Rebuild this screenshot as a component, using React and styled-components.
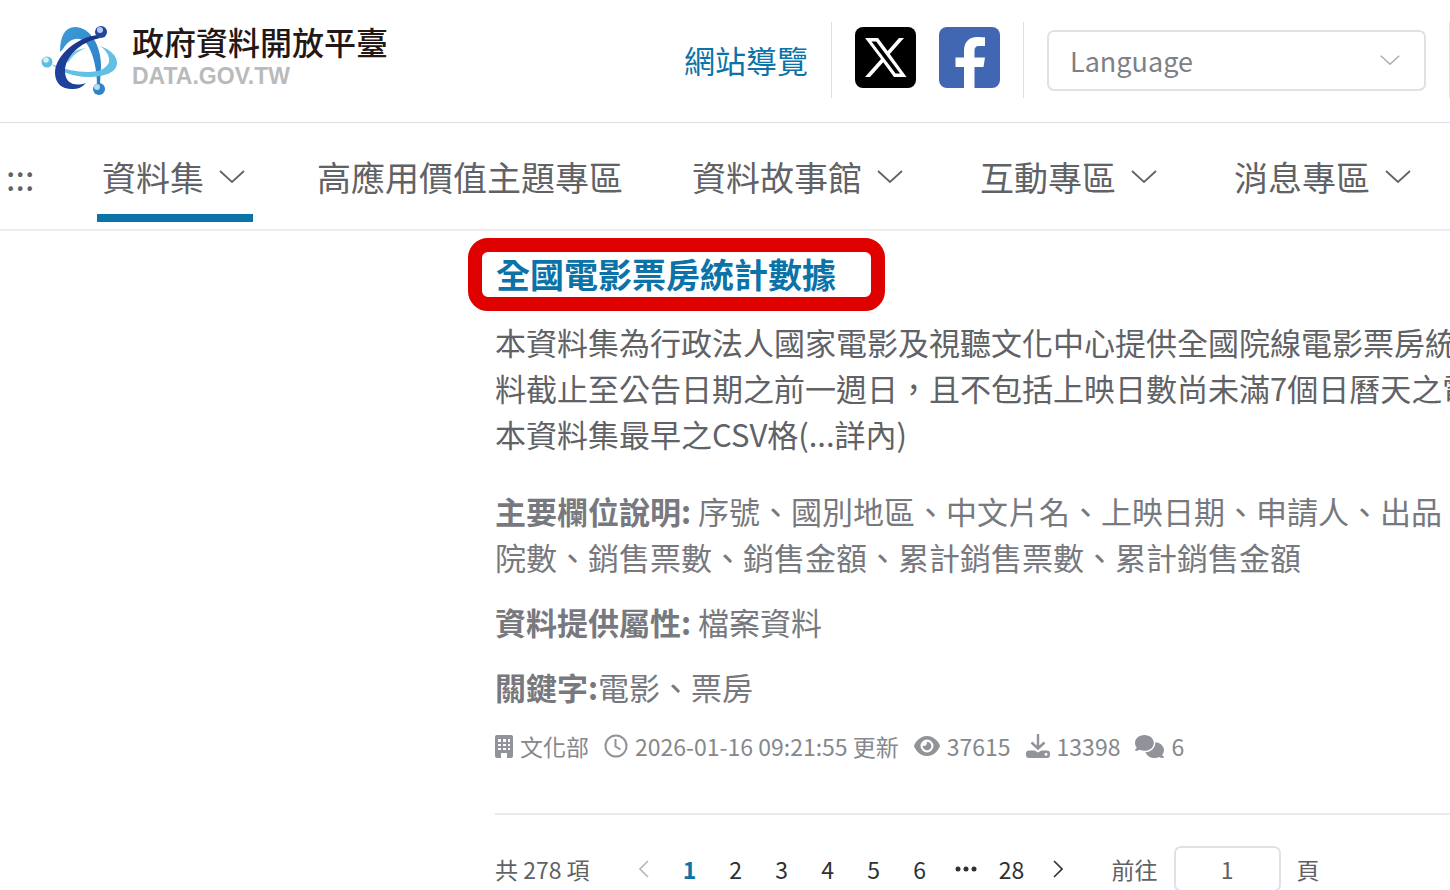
import React from "react";
import styled, { createGlobalStyle } from "styled-components";
import { FaEye, FaComments } from "react-icons/fa6";

const GlobalStyle = createGlobalStyle`
    * { box-sizing: border-box; }
    body {
        margin: 0;
        overflow: hidden;
        background: #fff;
        color: #606266;
        font-family: "Noto Sans CJK TC", "Noto Sans", sans-serif;
    }
    button, input, select { font: inherit; color: inherit; }
    a { color: inherit; text-decoration: none; }
    p, h1, h2, ul { margin: 0; padding: 0; }
    svg { display: block; flex: none; }`;

const Header = styled.header`
    display: flex;
    justify-content: space-between;
    align-items: center;
    height: 123px;
    padding: 0 0 2px 40px;
    border-bottom: 1px solid #dcdfe3;`;

const Brand = styled.a`
    display: flex;
    align-items: flex-start;
    gap: 12px;
    margin-bottom: 2px;`;

const BrandText = styled.span`
    display: flex;
    flex-direction: column;`;

const BrandName = styled.span`
    color: #231815;
    font-size: 32px;
    font-weight: 500;
    line-height: 40px;`;

const BrandDomain = styled.span`
    color: #b9babb;
    font: bold 23px/30px "Liberation Sans", sans-serif;`;

const Tools = styled.div`
    display: flex;
    align-items: center;
    gap: 23px;`;

const SiteMap = styled.a`
    color: #0b73a7;
    font-size: 31px;
    line-height: 46px;`;

const Divider = styled.span`
    width: 1px;
    height: 76px;
    background: #dcdfe3;`;

const Social = styled.a`
    display: block;
    width: 61px;
    height: 61px;
    margin-bottom: 5px;
    border-radius: 8px;
    overflow: hidden;
    background: ${props => props.$color};`;

const SelectBox = styled.label`
    display: grid;
    align-items: center;
    width: 379px;

    > * { grid-area: 1 / 1; }

    svg {
        justify-self: end;
        margin-right: 26px;
        pointer-events: none;
    }`;

const Select = styled.select`
    appearance: none;
    width: 100%;
    height: 61px;
    padding: 0 21px;
    border: 2px solid #dfe1e5;
    border-radius: 7px;
    background: #fff;
    color: #7d8086;
    font-size: 27px;`;

const Nav = styled.nav`
    display: flex;
    align-items: center;
    height: 108px;
    padding: 0 31px 0 6px;
    border-bottom: 2px solid #ebedee;
    font-size: 34px;
    white-space: nowrap;`;

const AccessKey = styled.a`
    width: 91px;`;

const Menu = styled.ul`
    display: flex;
    flex: 1;
    justify-content: space-between;
    list-style: none;`;

const MenuLink = styled.a`
    display: flex;
    align-items: center;
    gap: 15px;
    height: 91px;
    padding: ${props => (props.$plain ? "0" : "0 8px 0 5px")};
    border-bottom: 8px solid ${props => (props.$active ? "#0b73a7" : "transparent")};
    border-top: 8px solid transparent;`;

const Content = styled.main`
    padding: 7px 0 0 495px;
    overflow: hidden;
    white-space: nowrap;
    font-size: 31px;
    line-height: 46px;`;

const Title = styled.h2`
    width: fit-content;
    height: 73px;
    margin-left: -27px;
    padding: 0 35px 0 14px;
    border: 14px solid #df0000;
    border-radius: 20px;
    color: #0b73a7;
    font-size: 34px;
    font-weight: 700;
    line-height: 44px;`;

const Summary = styled.p`
    margin-top: 8px;`;

const Field = styled.p`
    margin-top: ${props => (props.$first ? "31px" : "19px")};
    color: #77797e;`;

const Meta = styled.div`
    display: flex;
    align-items: center;
    gap: 15px;
    margin-top: 19px;
    padding-bottom: 50px;
    border-bottom: 2px solid #e9eaeb;
    color: #85888c;
    font-size: 23px;
    line-height: 34px;`;

const MetaItem = styled.span`
    display: flex;
    align-items: center;
    gap: 7px;

    svg { color: #909399; }`;

const Pagination = styled.div`
    display: flex;
    align-items: center;
    margin-top: 31px;
    font-size: 23px;`;

const Pages = styled.div`
    display: flex;
    margin: 0 31px;`;

const Page = styled.button`
    display: flex;
    align-items: center;
    justify-content: center;
    width: 46px;
    height: 46px;
    padding: 0;
    border: 0;
    background: none;
    color: ${props => (props.$active ? "#0b73a7" : "#303133")};
    font-weight: ${props => (props.$active ? 700 : 400)};

    &:disabled { color: #b4b7bd; }`;

const Jump = styled.label`
    display: flex;
    align-items: center;
    gap: 16px;`;

const JumpInput = styled.input`
    width: 107px;
    height: 46px;
    border: 2px solid #dfe1e5;
    border-radius: 7px;
    text-align: center;`;

const menu = [
    { name: "資料集", active: true },
    { name: "高應用價值主題專區", plain: true },
    { name: "資料故事館" },
    { name: "互動專區" },
    { name: "消息專區" },
];

const Chevron = ({ width = 26, color = "#606266" }) => (
    <svg width={width} height={width / 2} viewBox="0 0 26 13" fill="none" stroke={color} strokeWidth="1.8">
        <path d="M1 1l12 11L25 1" />
    </svg>
);

const Arrow = ({ d }) => (
    <svg width="10" height="18" viewBox="0 0 10 18" fill="none" stroke="currentColor" strokeWidth="1.600">
        <path d={d} />
    </svg>
);

const Logo = () => (
    <svg width="80" height="76" viewBox="0 0 80 76">
        <defs>
            <linearGradient id="navy" x1="1" y1="0" x2="0" y2="1">
                <stop offset="0" stopColor="#1d2f80" />
                <stop offset="1" stopColor="#1d46a3" />
            </linearGradient>
            <linearGradient id="blue" x1="0" y1="0" x2="1" y2="1">
                <stop offset="0" stopColor="#3f9bd8" />
                <stop offset="1" stopColor="#2a7fc4" />
            </linearGradient>
        </defs>
        <path d="M26 37C31 31 38 28 46 27C38 30 32 35 28 42Z" fill="#7ccbe9" />
        <path d="M20 31C20 15 25 6 35 6C51 6 61 26 61 44C61 52 60 58 60 64H57C57 50 54 34 47 23C40 14 29 17 23 28Z" fill="url(#blue)" />
        <path d="M60 25C71 29 77 35 77 42C77 51 65 56 48 56C34 56 21 51 11 43C24 48 36 51 48 51C60 51 67 47 69 41C70 35 66 29 60 25Z" fill="#62c0e4" />
        <path d="M58 14C40 15 15 33 15 52C15 63 23 69 34 68C39 68 43 65 46 62C34 66 25 62 25 50C25 36 40 21 60 17Z" fill="url(#navy)" />
        <circle cx="61" cy="11" r="6" fill="#20479d" />
        <circle cx="60" cy="9" r="3" fill="#b8cae9" />
        <circle cx="7" cy="41" r="5.500" fill="#5fbde1" />
        <circle cx="6" cy="39" r="2.800" fill="#d4f0fa" />
        <circle cx="59" cy="68" r="6" fill="#2f83c6" />
        <circle cx="57" cy="66" r="3" fill="#b5dbf3" />
    </svg>
);

const XLogo = () => (
    <svg width="61" height="61" viewBox="0 0 61 61">
        <path d="M10 11h13l9.600 13L44 11h5L34.800 27.100 51.500 50H39l-10.800-14.800L15 50h-5l16-17.900zM16.500 14.500 40.600 46.500h4.500L21.200 14.500z" fill="#fff" fillRule="evenodd" />
    </svg>
);

const FacebookLogo = () => (
    <svg width="61" height="61" viewBox="0 0 61 61">
        <path d="M25 61V40h-8.500v-9.500H25V24c0-9 5-14 13-14 3.500 0 6 .3 8 .5V19h-5.500c-4 0-5 2-5 5v6.500H46L44.500 40h-9v21z" fill="#fff" />
    </svg>
);

const OfficeIcon = () => (
    <svg width="18" height="23" viewBox="0 0 18 23" fill="currentColor">
        <path fillRule="evenodd" d="M2 0h14a2 2 0 0 1 2 2v19a2 2 0 0 1-2 2h-4v-5H6v5H2a2 2 0 0 1-2-2V2a2 2 0 0 1 2-2zM3 4v3h3V4zM8 4v3h3V4zM13 4v3h2V4zM3 9v2h3V9zM8 9v2h3V9zM13 9v2h2V9zM3 13v2h3v-2zM8 13v2h3v-2zM13 13v2h2v-2z" />
    </svg>
);

const ClockIcon = () => (
    <svg width="24" height="24" viewBox="0 0 24 24" fill="none" stroke="currentColor" strokeWidth="2">
        <circle cx="12" cy="12" r="10.500" />
        <path d="M11.500 5v7.500l5 3" />
    </svg>
);

const DownloadIcon = () => (
    <svg width="24" height="24" viewBox="0 0 24 24">
        <path d="M12 0v14M5.500 8.500l6.500 6 6.500-6" fill="none" stroke="currentColor" strokeWidth="2.400" />
        <path fillRule="evenodd" d="M3 16.500h5.500l3.500 2 3.500-2H21a3 3 0 0 1 3 3V21a3 3 0 0 1-3 3H3a3 3 0 0 1-3-3v-1.500a3 3 0 0 1 3-3zm17 2.300a1.500 1.500 0 1 0 0 3 1.500 1.500 0 0 0 0-3z" fill="currentColor" />
    </svg>
);

const App = () => (
    <>
        <GlobalStyle />
        <Header>
            <Brand href="#">
                <Logo />
                <BrandText>
                    <BrandName>政府資料開放平臺</BrandName>
                    <BrandDomain>DATA.GOV.TW</BrandDomain>
                </BrandText>
            </Brand>
            <Tools>
                <SiteMap href="#">網站導覽</SiteMap>
                <Divider />
                <Social href="#" $color="#000" aria-label="X"><XLogo /></Social>
                <Social href="#" $color="#4267b2" aria-label="Facebook"><FacebookLogo /></Social>
                <Divider />
                <SelectBox>
                    <Select aria-label="Language">
                        <option>Language</option>
                    </Select>
                    <Chevron width={20} color="#a8abb2" />
                </SelectBox>
                <Divider />
            </Tools>
        </Header>
        <Nav>
            <AccessKey href="#content">:::</AccessKey>
            <Menu>
                {menu.map(item => (
                    <li key={item.name}>
                        <MenuLink href="#" $active={item.active} $plain={item.plain}>
                            {item.name}
                            {!item.plain && <Chevron />}
                        </MenuLink>
                    </li>
                ))}
            </Menu>
        </Nav>
        <Content id="content">
            <Title><a href="#">全國電影票房統計數據</a></Title>
            <Summary>
                本資料集為行政法人國家電影及視聽文化中心提供全國院線電影票房統<br />
                料截止至公告日期之前一週日，且不包括上映日數尚未滿7個日曆天之電<br />
                本資料集最早之CSV格(...詳內)
            </Summary>
            <Field $first>
                <b>主要欄位說明:</b> 序號、國別地區、中文片名、上映日期、申請人、出品、<br />
                院數、銷售票數、銷售金額、累計銷售票數、累計銷售金額
            </Field>
            <Field><b>資料提供屬性:</b> 檔案資料</Field>
            <Field><b>關鍵字:</b>電影、票房</Field>
            <Meta>
                <MetaItem><OfficeIcon />文化部</MetaItem>
                <MetaItem><ClockIcon />2026-01-16 09:21:55 更新</MetaItem>
                <MetaItem><FaEye size={26} />37615</MetaItem>
                <MetaItem><DownloadIcon />13398</MetaItem>
                <MetaItem><FaComments size={29} />6</MetaItem>
            </Meta>
            <Pagination>
                <span>共 278 項</span>
                <Pages>
                    <Page disabled aria-label="上一頁"><Arrow d="M9 1L1 9l8 8" /></Page>
                    <Page $active>1</Page>
                    {[2, 3, 4, 5, 6].map(n => <Page key={n}>{n}</Page>)}
                    <Page aria-label="更多">
                        <svg width="22" height="6" viewBox="0 0 22 6" fill="currentColor">
                            <circle cx="3" cy="3" r="2.500" />
                            <circle cx="11" cy="3" r="2.500" />
                            <circle cx="19" cy="3" r="2.500" />
                        </svg>
                    </Page>
                    <Page>28</Page>
                    <Page aria-label="下一頁"><Arrow d="M1 1l8 8-8 8" /></Page>
                </Pages>
                <Jump>
                    前往
                    <JumpInput type="text" defaultValue="1" />
                    頁
                </Jump>
            </Pagination>
        </Content>
    </>
);

export default App;
